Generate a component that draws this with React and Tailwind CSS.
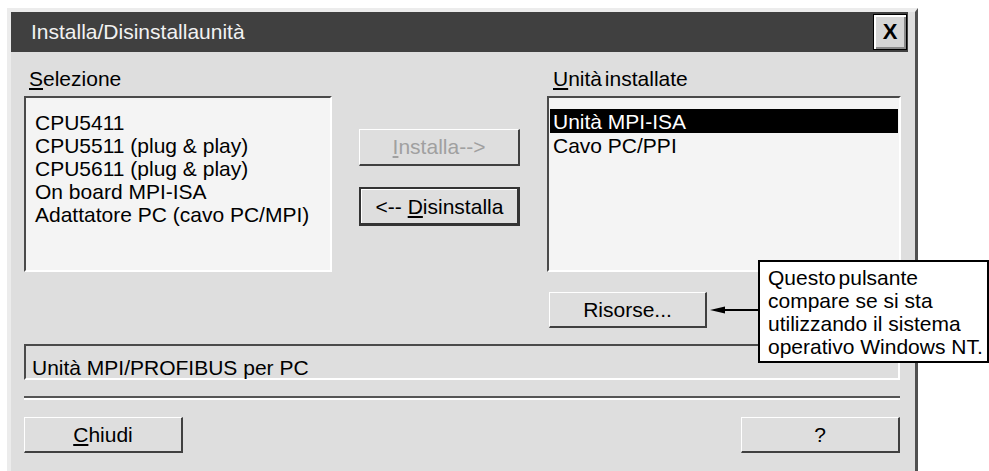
import React from 'react';

const Btn = ({ children, className = '' }) => (
  <div
    className={`flex items-center justify-center bg-[#dedede] border-t border-l border-t-white border-l-white border-r-2 border-b-2 border-r-[#404040] border-b-[#404040] ${className}`}
  >
    {children}
  </div>
);

const ListBox = ({ children, className = '' }) => (
  <div
    className={`h-[176px] border-2 border-t-[#4a4a4a] border-l-[#4a4a4a] border-r-white border-b-white bg-[#f4f4f4] ${className}`}
  >
    {children}
  </div>
);

const available = [
  'CPU5411',
  'CPU5511 (plug & play)',
  'CPU5611 (plug & play)',
  'On board MPI-ISA',
  'Adattatore PC (cavo PC/MPI)',
];

const installed = ['Unità MPI-ISA', 'Cavo PC/PPI'];

export default function App() {
  return (
    <div className="relative w-[989px] h-[471px] overflow-hidden bg-white font-['Liberation_Sans',Arial,sans-serif] text-[21px] leading-[22px] text-black">
      {/* dialog window */}
      <div className="ml-[7px] mt-[8px] w-[911px] h-[480px] bg-[#dedede] border-l-4 border-t-4 border-r-[3px] border-l-[#ececec] border-t-[#ececec] border-r-[#505050]">
        <div className="h-10 mr-[7px] bg-[#404040] flex items-center justify-between pl-5 pr-[1px]">
          <span className="text-[#f2f2f2]">Installa/Disinstallaunità</span>
          <div className="w-[34px] h-[36px] border border-black bg-[#d6d6d6] shadow-[inset_2px_2px_0_#ffffff,inset_-2px_-2px_0_#8a8a8a] flex items-center justify-center font-bold text-[22px]">
            X
          </div>
        </div>

        <div className="pl-[13px] pr-[14px]">
          <div className="flex items-start pt-4">
            <div className="w-[308px]">
              <div className="pl-[5px] h-[22px]">
                <span className="underline underline-offset-2">S</span>elezione
              </div>
              <ListBox className="mt-[6px] pl-[9px] pt-[13px] leading-[23px]">
                {available.map((item) => (
                  <div key={item}>{item}</div>
                ))}
              </ListBox>
            </div>

            <div className="w-[215px] flex flex-col items-center pt-[61px]">
              <Btn className="w-[161px] h-[37px] text-[#a0a0a0]">
                <span>
                  <span className="underline underline-offset-2">I</span>nstalla--&gt;
                </span>
              </Btn>
              <div className="mt-[21px] w-[161px] h-[39px] flex items-center justify-center bg-[#dedede] border-2 border-[#333] shadow-[inset_-1px_-1px_0_#333,inset_1px_1px_0_#ffffff]">
                <span>
                  &lt;-- <span className="underline underline-offset-2">D</span>isinstalla
                </span>
              </div>
            </div>

            <div className="w-[354px]">
              <div className="pl-[6px] h-[22px] [word-spacing:-3px]">
                <span className="underline underline-offset-2">U</span>nità installate
              </div>
              <ListBox className="mt-[6px] pt-[11px] px-[1px]">
                {installed.map((item, i) => (
                  <div
                    key={item}
                    className={`h-6 leading-[26px] pl-[3px] ${i === 0 ? 'bg-black text-white' : ''}`}
                  >
                    {item}
                  </div>
                ))}
              </ListBox>
              <Btn className="mt-5 ml-[2px] w-[158px] h-9">Risorse...</Btn>
            </div>
          </div>

          {/* status line */}
          <div className="mt-4 h-9 mr-[1px] border-2 border-t-[#4a4a4a] border-l-[#4a4a4a] border-r-white border-b-white pl-[6px] pt-[11px]">
            Unità MPI/PROFIBUS per PC
          </div>

          <div className="mt-4 mr-[1px] border-t-2 border-t-[#555] border-b-2 border-b-white" />

          <div className="mt-[17px] mr-[1px] flex justify-between">
            <Btn className="w-[159px] h-9">
              <span>
                <span className="underline underline-offset-2">C</span>hiudi
              </span>
            </Btn>
            <Btn className="w-[159px] h-9">?</Btn>
          </div>
        </div>
      </div>

      {/* annotation */}
      <svg className="absolute left-[709px] top-[303px]" width="50" height="14" viewBox="0 0 50 14">
        <line x1="14" y1="7" x2="50" y2="7" stroke="black" strokeWidth="2" />
        <polygon points="1,7 16,3.5 16,10.5" fill="black" />
      </svg>
      <div className="absolute left-[758px] top-[260px] w-[231px] h-[103px] border-2 border-black bg-white pl-[8px] pt-[4px] leading-[23px]">
        <div className="[word-spacing:-3px]">Questo pulsante</div>
        <div>compare se si sta</div>
        <div>utilizzando il sistema</div>
        <div>operativo Windows NT.</div>
      </div>
    </div>
  );
}
